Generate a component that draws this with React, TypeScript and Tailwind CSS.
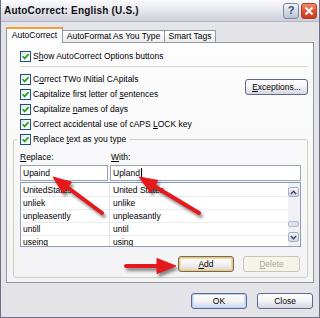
import React from 'react';

const rows = [
  ['UnitedStates', 'United States'],
  ['unliek', 'unlike'],
  ['unpleasently', 'unpleasantly'],
  ['untill', 'until'],
  ['useing', 'using'],
];

function CheckBox() {
  return (
    <span className="flex h-[11px] w-[11px] shrink-0 items-center justify-center border border-[#1c5180] bg-gradient-to-br from-[#dcdcd7] via-white to-white">
      <svg width="9" height="9" viewBox="0 0 9 9">
        <path d="M1.6 4.2 L3.6 6.4 L7.6 2.2" fill="none" stroke="#21a121" strokeWidth="1.7" />
      </svg>
    </span>
  );
}

function CheckRow({ children }: { children: React.ReactNode }) {
  return (
    <div className="flex h-[15px] items-center gap-[2px]">
      <CheckBox />
      <span className="whitespace-nowrap">{children}</span>
    </div>
  );
}

function Button({
  children,
  className,
  variant,
}: {
  children: React.ReactNode;
  className: string;
  variant?: 'default' | 'focus' | 'disabled';
}) {
  const inner =
    variant === 'default'
      ? 'shadow-[inset_0_0_0_1px_#f9c65d,inset_0_0_0_2px_#fbd88f]'
      : variant === 'focus'
        ? 'shadow-[inset_0_0_0_1px_#b9d1fa,inset_0_-1px_0_2px_#cee0fb]'
        : '';
  const border = variant === 'disabled' ? 'border-[#c9c7ba]' : 'border-[#5d6a8c]';
  const bg =
    variant === 'disabled'
      ? 'bg-[#f5f4ea]'
      : 'bg-gradient-to-b from-white via-[#f3f3f6] to-[#d6d5df]';
  return (
    <div
      className={`flex items-center justify-center rounded-[3px] border ${border} ${bg} ${inner} ${className} ${
        variant === 'disabled' ? 'text-[#aca899]' : ''
      }`}
    >
      {children}
    </div>
  );
}

function Arrows() {
  return (
    <svg
      className="pointer-events-none absolute left-0 top-0 drop-shadow-[2px_3px_1.5px_rgba(0,0,0,0.45)]"
      width="320"
      height="318"
      viewBox="0 0 320 318"
    >
      <g fill="#e5181b" stroke="#e5181b">
        <line x1="101" y1="213" x2="66" y2="187" strokeWidth="4" strokeLinecap="round" />
        <polygon points="52,177 70.6,182.2 62.2,193.4" strokeWidth="1" />
        <line x1="198" y1="213" x2="153" y2="186" strokeWidth="4" strokeLinecap="round" />
        <polygon points="138,177 157,180.4 149.7,192.4" strokeWidth="1" />
        <line x1="125" y1="266" x2="157" y2="266" strokeWidth="4" strokeLinecap="round" />
        <polygon points="175,266 156,258.5 156,273.5" strokeWidth="1" />
      </g>
    </svg>
  );
}

export default function App() {
  return (
    <div className="relative flex h-[318px] w-[320px] flex-col overflow-hidden border-x border-b border-[#6d6d88] bg-[#e4e3e8] font-['Liberation_Sans',Arial,sans-serif] text-[8.5px] leading-none text-black">
      {/* title bar */}
      <div className="flex h-[22px] shrink-0 items-center justify-between border-b border-[#b4b4c4] bg-gradient-to-b from-[#fbfbfd] via-[#e6e6ee] to-[#cfcfdb] pl-[3px] pr-[2px]">
        <span className="text-[10px] font-bold tracking-[0.2px] text-[#111]">AutoCorrect: English (U.S.)</span>
        <div className="flex gap-[2px]">
          <div className="flex h-[16px] w-[16px] items-center justify-center rounded-[3px] border border-[#7b86a4] bg-gradient-to-b from-[#f4f6fb] to-[#b9c1d6] text-[11px] font-bold text-[#3a4a70]">
            ?
          </div>
          <div className="flex h-[16px] w-[16px] items-center justify-center rounded-[3px] border border-[#a8402a] bg-gradient-to-b from-[#f08a6c] via-[#e4522e] to-[#c83a1c]">
            <svg width="10" height="10" viewBox="0 0 10 10">
              <path d="M1.5 1.5 L8.5 8.5 M8.5 1.5 L1.5 8.5" stroke="white" strokeWidth="2" />
            </svg>
          </div>
        </div>
      </div>

      <div className="flex flex-col px-[5px] pt-[5px]">
        {/* tabs */}
        <div className="flex h-[15px] items-end">
          <div className="relative top-px z-10 flex h-[16px] w-[57px] items-center justify-center border-x border-t-2 border-[#919b9c] border-t-[#f2a23b] bg-[#fcfcfe] pb-[1px]">
            AutoCorrect
          </div>
          <div className="flex h-[12px] w-[102px] items-center justify-center border-r border-t border-[#919b9c] bg-gradient-to-b from-white to-[#ececf0]">
            AutoFormat As You Type
          </div>
          <div className="flex h-[12px] w-[51px] items-center justify-center border-r border-t border-[#919b9c] bg-gradient-to-b from-white to-[#ececf0]">
            Smart Tags
          </div>
        </div>

        {/* panel */}
        <div className="flex h-[241px] flex-col border border-[#919b9c] bg-gradient-to-b from-[#fdfdfe] to-[#f3f3f5] pt-[6px]">
          <div className="pl-[13px]">
            <CheckRow>
              S<u>h</u>ow AutoCorrect Options buttons
            </CheckRow>
          </div>
          <div className="ml-[13px] mr-[5px] mt-[2px] h-px bg-[#d6d6cc]" />

          <div className="mt-[5px] flex justify-between pl-[13px] pr-[5px]">
            <div className="flex flex-col">
              <CheckRow>
                C<u>o</u>rrect TWo INitial CApitals
              </CheckRow>
              <CheckRow>
                Capitalize first letter of <u>s</u>entences
              </CheckRow>
              <CheckRow>
                Capitalize <u>n</u>ames of days
              </CheckRow>
              <CheckRow>
                Correct accidental use of cAPS <u>L</u>OCK key
              </CheckRow>
            </div>
            <Button className="mt-[7px] h-[16px] w-[63px]">
              <span>
                <u>E</u>xceptions...
              </span>
            </Button>
          </div>

          <fieldset className="ml-[6px] mr-[5px] rounded-[3px] border border-[#d0d0bf] px-[3px] pb-[5px]">
            <legend className="px-[3px]">
              <CheckRow>
                Replace <u>t</u>ext as you type
              </CheckRow>
            </legend>
            <div className="px-[3px]">
              <div className="mt-[5px] grid h-[11px] grid-cols-[88px_1fr] items-center gap-x-[2px]">
                <span>
                  <u>R</u>eplace:
                </span>
                <span className="pl-[1px]">
                  <u>W</u>ith:
                </span>
              </div>
              <div className="mt-[2px] grid grid-cols-[88px_1fr] gap-x-[2px]">
                <div className="flex h-[16px] items-center border border-[#9aa4b4] bg-white pl-[2px]">Upaind</div>
                <div className="flex h-[16px] items-center border border-[#9aa4b4] bg-white pl-[2px]">
                  Upland<span className="ml-px h-[10px] w-px bg-black" />
                </div>
              </div>

              {/* list */}
              <div className="mt-[1px] flex h-[65px] border border-[#8e9bb0] border-t-[#7f9db9] bg-white">
                <div className="flex flex-1 flex-col overflow-hidden pt-[1px]">
                  {rows.map(([a, b]) => (
                    <div key={a} className="grid h-[13px] shrink-0 grid-cols-[89px_1fr] border-b border-[#ececec]">
                      <span className="flex items-center border-r border-[#e2e2e2] pl-[2px]">{a}</span>
                      <span className="flex items-center pl-[3px]">{b}</span>
                    </div>
                  ))}
                </div>
                <div className="flex w-[12px] flex-col bg-[#f1f1f4] py-[4px] pr-px">
                  <div className="flex h-[10px] items-center justify-center rounded-[2px] border border-[#a7aec6] bg-gradient-to-b from-[#f6f7fb] to-[#cfd3e3]">
                    <svg width="7" height="5" viewBox="0 0 7 5">
                      <path d="M0.8 4 L3.5 1.2 L6.2 4" fill="none" stroke="#3b4660" strokeWidth="1.4" />
                    </svg>
                  </div>
                  <div className="flex-1" />
                  <div className="mb-[5px] h-[6px] rounded-[2px] border border-[#b3b9cf] bg-gradient-to-r from-[#e6e8f1] to-[#d4d8e6]" />
                  <div className="flex h-[10px] items-center justify-center rounded-[2px] border border-[#a7aec6] bg-gradient-to-b from-[#f6f7fb] to-[#cfd3e3]">
                    <svg width="7" height="5" viewBox="0 0 7 5">
                      <path d="M0.8 1 L3.5 3.8 L6.2 1" fill="none" stroke="#3b4660" strokeWidth="1.4" />
                    </svg>
                  </div>
                </div>
              </div>

              <div className="mt-[9px] flex justify-end gap-[9px] pr-[1px]">
                <Button className="h-[16px] w-[56px]" variant="default">
                  <span>
                    <u>A</u>dd
                  </span>
                </Button>
                <Button className="h-[16px] w-[57px]" variant="disabled">
                  <span>
                    <u>D</u>elete
                  </span>
                </Button>
              </div>
            </div>
          </fieldset>
        </div>

        {/* footer */}
        <div className="mt-[10px] flex justify-end gap-[10px] pr-[1px]">
          <Button className="h-[16px] w-[56px]" variant="focus">
            OK
          </Button>
          <Button className="h-[16px] w-[56px]">Close</Button>
        </div>
      </div>

      <Arrows />
    </div>
  );
}
